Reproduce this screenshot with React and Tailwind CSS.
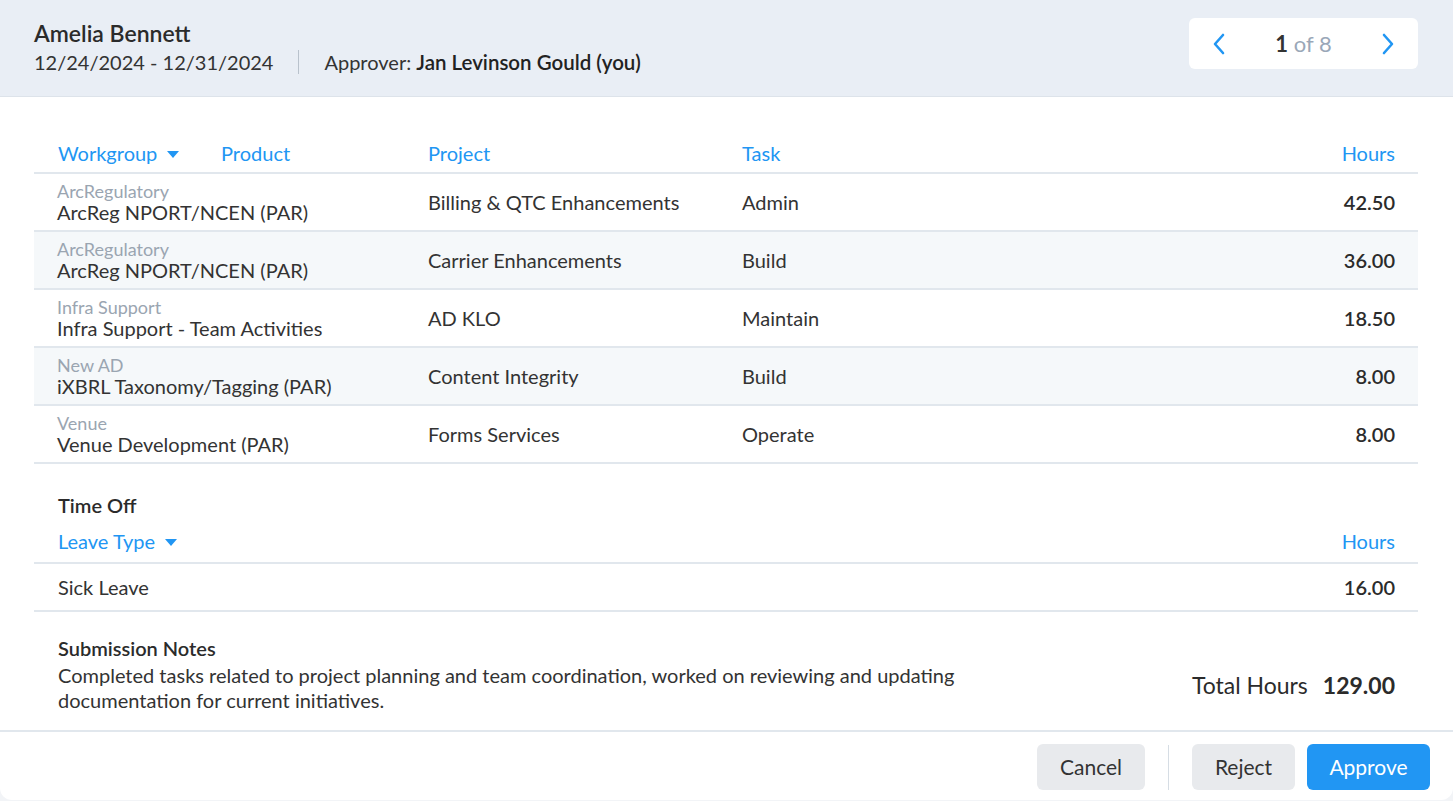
import React from 'react';

const entries = [
  { group: 'ArcRegulatory', product: 'ArcReg NPORT/NCEN (PAR)', project: 'Billing & QTC Enhancements', task: 'Admin', hours: '42.50' },
  { group: 'ArcRegulatory', product: 'ArcReg NPORT/NCEN (PAR)', project: 'Carrier Enhancements', task: 'Build', hours: '36.00' },
  { group: 'Infra Support', product: 'Infra Support - Team Activities', project: 'AD KLO', task: 'Maintain', hours: '18.50' },
  { group: 'New AD', product: 'iXBRL Taxonomy/Tagging (PAR)', project: 'Content Integrity', task: 'Build', hours: '8.00' },
  { group: 'Venue', product: 'Venue Development (PAR)', project: 'Forms Services', task: 'Operate', hours: '8.00' },
];

function SortCaret() {
  return (
    <svg width="12" height="7" viewBox="0 0 12 7" className="ml-[10px] mt-[2px]">
      <path d="M0 0h12L6 7z" fill="#2196f3" />
    </svg>
  );
}

function Chevron({ dir }) {
  return (
    <svg width="14" height="22" viewBox="0 0 14 22" fill="none">
      <path
        d={dir === 'left' ? 'M11 2 3 11l8 9' : 'M3 2l8 9-8 9'}
        stroke="#2196f3"
        strokeWidth="2.6"
        strokeLinecap="round"
        strokeLinejoin="round"
      />
    </svg>
  );
}

function Pager() {
  return (
    <div className="flex h-[51px] w-[229px] items-center justify-between rounded-[6px] bg-white pl-[14px] pr-[14px]">
      <button className="flex h-8 w-8 items-center justify-center">
        <Chevron dir="left" />
      </button>
      <div className="text-[22px] leading-none">
        <span className="font-bold text-[#333]">1</span>
        <span className="text-[#9aa7b8]"> of 8</span>
      </div>
      <button className="flex h-8 w-8 items-center justify-center">
        <Chevron dir="right" />
      </button>
    </div>
  );
}

function Header() {
  return (
    <div className="flex h-[97px] items-center justify-between border-b border-[#dde3ea] bg-[#e9eef5] pl-[34px] pr-[35px]">
      <div className="pb-[2px]">
        <div className="text-[23px] font-semibold leading-[26px] text-[#2b2b2b]">Amelia Bennett</div>
        <div className="mt-[4px] flex items-center text-[20px] leading-[24px] text-[#333]">
          <span>12/24/2024 - 12/31/2024</span>
          <span className="mx-[25px] h-[24px] w-px bg-[#b9c2cc]" />
          <span>
            Approver: <span className="text-[20.5px] font-semibold text-[#222]">Jan Levinson Gould (you)</span>
          </span>
        </div>
      </div>
      <div className="self-start pt-[18px]">
        <Pager />
      </div>
    </div>
  );
}

function EntryTable() {
  return (
    <div>
      <div className="flex h-[40px] items-end border-b-2 border-[#e1e7ed] pb-[7px] text-[20px] leading-[24px] text-[#2196f3]">
        <div className="flex w-[187px] items-center pl-[24px]">
          Workgroup <SortCaret />
        </div>
        <div className="w-[207px]">Product</div>
        <div className="w-[314px]">Project</div>
        <div className="flex-1">Task</div>
        <div className="pr-[23px] text-right">Hours</div>
      </div>
      {entries.map((e, i) => (
        <div
          key={i}
          className={`flex h-[58px] items-center border-b-2 border-[#e1e7ed] text-[20px] text-[#333] ${i % 2 === 1 ? 'bg-[#f5f8fa]' : 'bg-white'}`}
        >
          <div className="w-[394px] pl-[23px]">
            <div className="mt-[2px] text-[18px] leading-[18px] text-[#9aa5b1]">{e.group}</div>
            <div className="leading-[24px]">{e.product}</div>
          </div>
          <div className="w-[314px] leading-[24px]">{e.project}</div>
          <div className="flex-1 leading-[24px]">{e.task}</div>
          <div className="pr-[23px] text-right font-semibold leading-[24px] text-[#2b2b2b]">{e.hours}</div>
        </div>
      ))}
    </div>
  );
}

function TimeOff() {
  return (
    <div className="mt-[29px]">
      <div className="pl-[24px] text-[20px] font-semibold leading-[24px] text-[#2b2b2b]">Time Off</div>
      <div className="flex h-[47px] items-end justify-between border-b-2 border-[#e1e7ed] pb-[9px] text-[20px] leading-[24px] text-[#2196f3]">
        <div className="flex items-center pl-[24px]">
          Leave Type <SortCaret />
        </div>
        <div className="pr-[23px]">Hours</div>
      </div>
      <div className="flex h-[48px] items-center justify-between border-b-2 border-[#e1e7ed] text-[20px] leading-[24px] text-[#333]">
        <div className="pl-[24px]">Sick Leave</div>
        <div className="pr-[23px] font-semibold text-[#2b2b2b]">16.00</div>
      </div>
    </div>
  );
}

function Notes() {
  return (
    <div className="mt-[24px] flex items-start justify-between pb-[17px]">
      <div className="w-[940px] pl-[24px]">
        <div className="text-[20px] font-semibold leading-[24px] text-[#2b2b2b]">Submission Notes</div>
        <p className="mt-[3px] text-[20px] leading-[25px] text-[#333]">
          Completed tasks related to project planning and team coordination, worked on reviewing and updating
          documentation for current initiatives.
        </p>
      </div>
      <div className="mt-[36px] flex items-baseline gap-[15px] pr-[23px] text-[23px] leading-[26px] text-[#2b2b2b]">
        <span>Total Hours</span>
        <span className="font-bold">129.00</span>
      </div>
    </div>
  );
}

function Footer() {
  const grey = 'h-[46px] rounded-[6px] bg-[#e8eaed] text-[21px] text-[#333]';
  return (
    <div className="flex h-[70px] items-start justify-end border-t-2 border-[#e1e7ed] pr-[23px] pt-[12px]">
      <button className={`${grey} w-[108px]`}>Cancel</button>
      <span className="mx-[23px] mt-px h-[45px] w-px bg-[#d6dde4]" />
      <button className={`${grey} w-[103px]`}>Reject</button>
      <button className="ml-[12px] h-[46px] w-[123px] rounded-[6px] bg-[#2196f3] text-[21px] text-white">Approve</button>
    </div>
  );
}

export default function App() {
  return (
    <div className="min-h-screen bg-[#f2f4f7]" style={{ fontFamily: 'Lato, "Open Sans", sans-serif' }}>
      <div className="overflow-hidden rounded-b-[12px] bg-white">
        <Header />
        <div className="pl-[34px] pr-[35px] pt-[37px]">
          <EntryTable />
          <TimeOff />
          <Notes />
        </div>
        <Footer />
      </div>
    </div>
  );
}
